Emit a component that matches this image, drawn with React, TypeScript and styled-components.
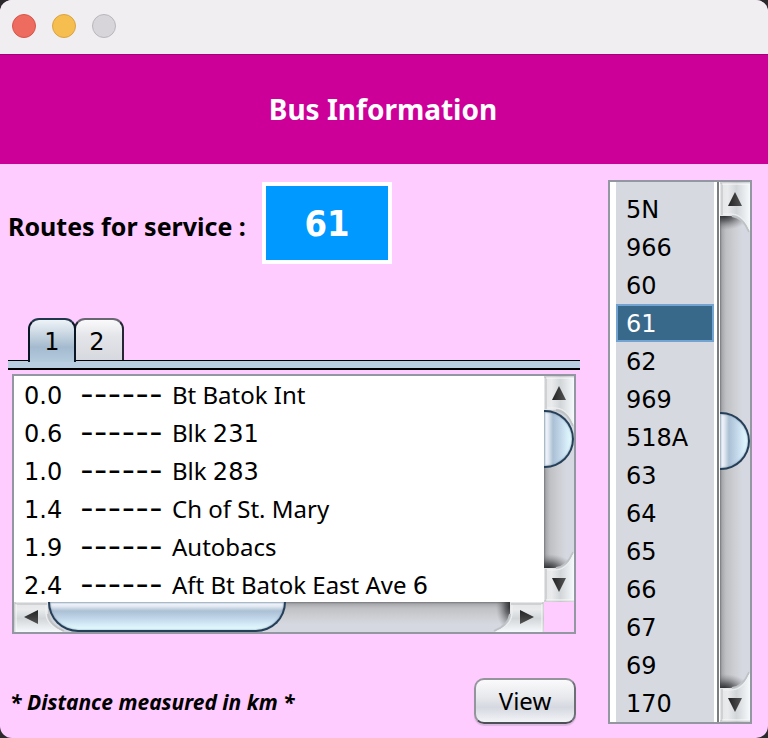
import React, { useId, useState } from "react";
import styled, { createGlobalStyle, css } from "styled-components";

const GlobalStyle = createGlobalStyle`
  * { box-sizing: border-box; }
  body { margin: 0; background: #2b292c; }
  button { font: inherit; color: inherit; padding: 0; border: 0; background: none; }
`;

const heading = `"Noto Sans", sans-serif`;
const digits = `"DejaVu Sans", sans-serif`;

const Window = styled.div`
  min-height: 100vh;
  display: flex;
  flex-direction: column;
  overflow: hidden;
  border-radius: 12px;
  background: #ffccff;
  color: #000;
  font-family: ${heading};
`;

const TitleBar = styled.div`
  display: flex;
  gap: 16px;
  padding: 14px 12px 16px;
  background: #f1eef2;
`;

const Light = styled.button<{ $fill: string; $edge: string }>`
  width: 24px;
  height: 24px;
  border-radius: 50%;
  background: ${(p) => p.$fill};
  border: 1px solid ${(p) => p.$edge};
`;

const Banner = styled.header`
  display: flex;
  align-items: center;
  justify-content: center;
  height: 110px;
  background: #cc0099;
  border-top: 1px solid #a5007c;
  color: #fff;
`;

const Title = styled.h1`
  margin: 0;
  padding: 0 2px 2px 0;
  font-size: 28px;
  line-height: 36px;
  font-weight: 700;
`;

const Body = styled.main`
  flex: 1;
  display: grid;
  grid-template-columns: minmax(0, 1fr) 144px;
  gap: 28px;
  padding: 16px 16px 14px 8px;
`;

const Main = styled.div`
  display: flex;
  flex-direction: column;
`;

const ServiceRow = styled.div`
  display: flex;
  align-items: center;
  padding-top: 2px;
`;

const ServiceLabel = styled.span`
  min-width: 254px;
  padding-top: 6px;
  font-size: 25px;
  line-height: 32px;
  font-weight: 700;
  white-space: nowrap;
`;

const ServiceBox = styled.output`
  display: flex;
  align-items: center;
  justify-content: center;
  width: 130px;
  height: 82px;
  border: 4px solid #fff;
  background: #0099ff;
  color: #fff;
  font: 700 36px "DejaVu Sans Condensed", "DejaVu Sans", sans-serif;
`;

const Tabs = styled.div`
  display: flex;
  margin-top: 54px;
  padding-left: 20px;
`;

const Tab = styled.button<{ $active: boolean }>`
  width: 48px;
  height: 44px;
  padding-top: 2px;
  margin-bottom: -2px;
  border: 2px solid;
  border-radius: 11px 11px 0 0;
  font: 24px/40px ${digits};
  & + & {
    width: 50px;
    margin-left: -2px;
    padding-right: 4px;
  }
  ${(p) =>
    p.$active
      ? css`
          z-index: 1;
          border-color: #20364b #0a1626 transparent;
          border-bottom-width: 0;
          background: linear-gradient(#eef3f7, #c7d5e1 35%, #a4bacf 65%, #b4cadd);
        `
      : css`
          border-color: #676671 #252533 #05050f;
          background: linear-gradient(#fafafb, #e4e5e9 40%, #d6d9df);
        `}
`;

const TabStrip = styled.div`
  height: 10px;
  border-top: 1px solid #000;
  border-bottom: 2px solid #000;
  background: #b9cfe1;
`;

const StopsPanel = styled.section`
  display: grid;
  grid-template-columns: minmax(0, 1fr) 30px;
  grid-template-rows: 226px 30px;
  margin: 4px 4px 0;
  border: 2px solid #9297a1;
`;

const Stops = styled.ul`
  margin: 0;
  padding: 0 0 0 10px;
  overflow: hidden;
  list-style: none;
  background: #fff;
`;

const Stop = styled.li`
  display: grid;
  grid-template-columns: 56px 92px 1fr;
  height: 38px;
  line-height: 38px;
  white-space: pre;
`;

const Distance = styled.span`
  font-family: ${digits};
  font-size: 24px;
  line-height: 40px;
`;

const Dashes = styled.span`
  font-family: Inter, sans-serif;
  font-size: 30px;
  line-height: 36px;
`;

const StopName = styled.span`
  font-size: 24px;
`;

const Numeral = styled.span`
  font-family: ${digits};
`;

const Footer = styled.footer`
  display: flex;
  align-items: center;
  justify-content: space-between;
  margin-top: auto;
  padding: 44px 4px 0 2px;
`;

const Note = styled.span`
  padding-top: 2px;
  font-size: 21px;
  line-height: 28px;
  font-weight: 700;
  font-style: italic;
`;

const ViewButton = styled.button`
  width: 102px;
  height: 46px;
  border: 2px solid;
  border-color: #94949c #6d6f76 #4d5057 #94949c;
  border-radius: 10px;
  background: linear-gradient(#fafafb, #e8e9ed 40%, #d5d8e0 65%, #f2f4f7);
  box-shadow: 0 2px 1px #dbb6df;
  font-size: 24px;
  line-height: 42px;
`;

const ServicePanel = styled.aside`
  display: flex;
  align-self: start;
  border: 2px solid #9297a1;
  background: #fff;
`;

const ServiceList = styled.div`
  flex: 1;
  display: flex;
  flex-direction: column;
  margin: 0 3px 0 6px;
  padding-top: 8px;
  background: #d6d9e0;
`;

const Divider = styled.div`
  width: 3px;
  border-left: 2px solid #7b7c80;
`;

const Service = styled.button<{ $selected: boolean }>`
  height: 38px;
  padding: 2px 0 0 8px;
  border: 2px solid transparent;
  text-align: left;
  font: 24px/32px ${digits};
  ${(p) =>
    p.$selected &&
    css`
      border-color: #73a4d1;
      background: #39698a;
      color: #fff;
    `}
`;

const Bar = styled.div<{ $row?: boolean }>`
  display: flex;
  flex-direction: ${(p) => (p.$row ? "row" : "column")};
  ${(p) => (p.$row ? "height" : "width")}: 30px;
  min-width: 0;
  overflow: hidden;
  background: linear-gradient(
    ${(p) => (p.$row ? "to bottom" : "to right")},
    #77787b, #a8a9ac 2px, #bfc0c4 6px, #cbccd0 13px, #d5d8e0 22px
  );
`;

const BarTrack = styled.div<{ $row?: boolean; $offset: number }>`
  z-index: 1;
  flex: 1;
  min-width: 0;
  min-height: 0;
  padding: ${(p) => (p.$row ? `0 0 0 ${p.$offset}px` : `${p.$offset}px 0 0`)};
`;

const Thumb = styled.div<{ $row?: boolean; $length: number }>`
  border: 2px solid #263f58;
  ${(p) =>
    p.$row
      ? css`
          width: ${p.$length}px;
          height: 30px;
          border-top: 0;
          border-radius: 0 0 30px 30px;
        `
      : css`
          width: 30px;
          height: ${p.$length}px;
          border-left: 0;
          border-radius: 0 30px 30px 0;
        `}
  background: linear-gradient(
    ${(p) => (p.$row ? "to bottom" : "to right")},
    #a9b8c9, #eef2f8 2px, #e6ecf4 4px, #abc0d4 9px, #c0d5e8 16px, #d4eaf6 22px, #e6fdff 28px
  );
  box-shadow: inset 0 0 2px #7a93ac;
`;

const BarButton = styled.button<{ $row?: boolean }>`
  flex: 0 0 34px;
  display: block;
  ${(p) => (p.$row ? "height" : "width")}: 30px;
  svg { display: block; overflow: visible; }
`;

type Direction = "up" | "down" | "left" | "right";

const orientation: Record<Direction, string> = {
  up: "matrix(1 0 0 1 0 0)",
  down: "matrix(1 0 0 -1 0 34)",
  left: "matrix(0 1 1 0 0 0)",
  right: "matrix(0 1 -1 0 34 0)",
};

function ArrowButton({ direction, shaded }: { direction: Direction; shaded: boolean }) {
  const id = useId().replace(/[^a-zA-Z0-9]/g, "");
  const row = direction === "left" || direction === "right";
  return (
    <BarButton type="button" $row={row} aria-label={`Scroll ${direction}`}>
      <svg width={row ? 34 : 30} height={row ? 30 : 34} aria-hidden="true">
        <defs>
          <linearGradient id={`${id}f`}>
            <stop offset="0" stopColor="#e3e5e7" />
            <stop offset=".25" stopColor="#e9ebed" />
            <stop offset=".55" stopColor="#d3d6d9" />
            <stop offset="1" stopColor="#f6fafc" />
          </linearGradient>
          <radialGradient id={`${id}s`} gradientUnits="userSpaceOnUse" cx="0" cy="0" r="1" gradientTransform="translate(4 33) scale(26 15)">
            <stop offset="0" stopColor="#1c1c20" stopOpacity=".95" />
            <stop offset=".4" stopColor="#38393d" stopOpacity=".65" />
            <stop offset="1" stopColor="#77787c" stopOpacity="0" />
          </radialGradient>
          <linearGradient id={`${id}a`}>
            <stop offset="0" stopColor="#222" />
            <stop offset="1" stopColor="#555" />
          </linearGradient>
        </defs>
        <g transform={orientation[direction]}>
          {shaded && <path d="M0 33H30V50H0Z" fill={`url(#${id}s)`} />}
          <path d="M0 0H30V50H28C24 40 18 34 10 34H0Z" fill={`url(#${id}f)`} />
          <path d="M12 34C20 35 25 40 29 50" fill="none" stroke="#bfc2c5" strokeWidth="2" />
          <path d="M3 32H11C20 32 26 39 29 47" fill="none" stroke="#f0f2f3" strokeWidth="1" />
          <path d="M0 1H30M2 1V33" fill="none" stroke="#b9bbbd" strokeWidth="1" />
          <path d="M2 2H30" stroke="#f9fafa" strokeWidth="1" />
          <path d="M8 24L15 10L22 24Z" fill={`url(#${id}a)`} />
        </g>
      </svg>
    </BarButton>
  );
}

function ScrollBar(props: { row?: boolean; offset: number; length: number; label: string }) {
  const { row, offset, length, label } = props;
  return (
    <Bar $row={row} role="group" aria-label={label}>
      <ArrowButton direction={row ? "left" : "up"} shaded={offset > 0} />
      <BarTrack $row={row} $offset={offset}>
        <Thumb $row={row} $length={length} />
      </BarTrack>
      <ArrowButton direction={row ? "right" : "down"} shaded />
    </Bar>
  );
}

const stops = [
  ["0.0", "Bt Batok Int", ""],
  ["0.6", "Blk ", "231"],
  ["1.0", "Blk ", "283"],
  ["1.4", "Ch of St. Mary", ""],
  ["1.9", "Autobacs", ""],
  ["2.4", "Aft Bt Batok East Ave ", "6"],
];

const services = ["5N", "966", "60", "61", "62", "969", "518A", "63", "64", "65", "66", "67", "69", "170"];

export default function App() {
  const [service, setService] = useState("61");
  const [tab, setTab] = useState("1");
  return (
    <>
      <GlobalStyle />
      <Window>
        <TitleBar>
          <Light $fill="#ed6b5f" $edge="#d65549" aria-label="Close" />
          <Light $fill="#f5be4f" $edge="#d9a441" aria-label="Minimize" />
          <Light $fill="#d7d5d9" $edge="#b9b7bb" aria-label="Zoom" disabled />
        </TitleBar>
        <Banner>
          <Title>Bus Information</Title>
        </Banner>
        <Body>
          <Main>
            <ServiceRow>
              <ServiceLabel>Routes for service :</ServiceLabel>
              <ServiceBox>{service}</ServiceBox>
            </ServiceRow>
            <Tabs role="tablist">
              {["1", "2"].map((name) => (
                <Tab key={name} role="tab" aria-selected={tab === name} $active={tab === name} onClick={() => setTab(name)}>
                  {name}
                </Tab>
              ))}
            </Tabs>
            <TabStrip />
            <StopsPanel>
              <Stops>
                {stops.map(([distance, name, number]) => (
                  <Stop key={distance}>
                    <Distance>{distance}</Distance>
                    <Dashes>------</Dashes>
                    <StopName>
                      {name}
                      {number && <Numeral>{number}</Numeral>}
                    </StopName>
                  </Stop>
                ))}
              </Stops>
              <ScrollBar label="Stops, vertical" offset={0} length={58} />
              <ScrollBar label="Stops, horizontal" row offset={0} length={238} />
            </StopsPanel>
            <Footer>
              <Note>* Distance measured in km *</Note>
              <ViewButton type="button">View</ViewButton>
            </Footer>
          </Main>
          <ServicePanel>
            <ServiceList role="listbox" aria-label="Services">
              {services.map((name) => (
                <Service key={name} role="option" aria-selected={service === name} $selected={service === name} onClick={() => setService(name)}>
                  {name}
                </Service>
              ))}
            </ServiceList>
            <Divider />
            <ScrollBar label="Services" offset={196} length={58} />
          </ServicePanel>
        </Body>
      </Window>
    </>
  );
}
